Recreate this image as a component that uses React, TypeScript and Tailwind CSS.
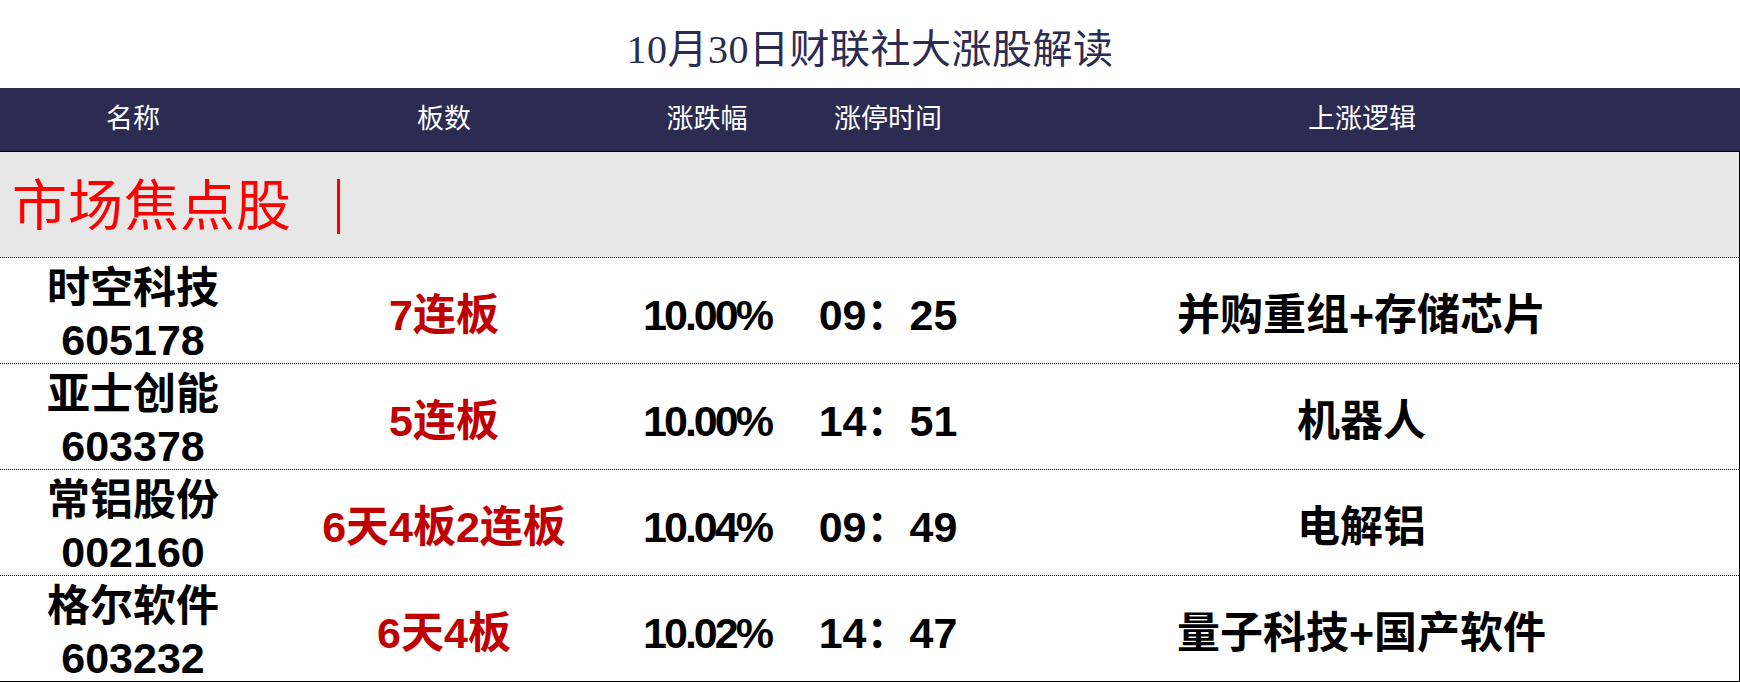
import React from 'react';

interface StockRow {
  name: string;
  code: string;
  boards: string;
  change: string;
  time: string;
  reason: string;
}

const rows: StockRow[] = [
  { name: '时空科技', code: '605178', boards: '7连板', change: '10.00%', time: '09：25', reason: '并购重组+存储芯片' },
  { name: '亚士创能', code: '603378', boards: '5连板', change: '10.00%', time: '14：51', reason: '机器人' },
  { name: '常铝股份', code: '002160', boards: '6天4板2连板', change: '10.04%', time: '09：49', reason: '电解铝' },
  { name: '格尔软件', code: '603232', boards: '6天4板', change: '10.02%', time: '14：47', reason: '量子科技+国产软件' },
];

const sans = { fontFamily: '"Liberation Sans", "Noto Sans CJK SC", sans-serif' };
const serif = { fontFamily: '"Liberation Serif", "Noto Sans CJK SC", serif' };

const cols = 'grid grid-cols-[266px_356px_170px_192px_1fr]';

export default function App() {
  return (
    <div className="w-[1740px] h-[682px] bg-white overflow-hidden" style={sans}>
      {/* Title */}
      <div className="h-[88px] flex items-center justify-center pt-[12px]">
        <h1 className="text-[40px] leading-none text-[#2c2c52] font-normal tracking-[0.5px]" style={serif}>
          10月30日财联社大涨股解读
        </h1>
      </div>

      {/* Header */}
      <div className={`${cols} h-[64px] bg-[#2c2b52] border-b border-black text-white text-[27px] items-center`}>
        <div className="text-center">名称</div>
        <div className="text-center">板数</div>
        <div className="text-center">涨跌幅</div>
        <div className="text-center">涨停时间</div>
        <div className="text-center">上涨逻辑</div>
      </div>

      <div className="border-r border-black">
        {/* Section label */}
        <div className="h-[106px] bg-[#e7e7e7] border-b border-dotted border-black flex items-center pl-[12px] pt-[4px]">
          <span className="text-[55px] leading-none text-[#ff0000] tracking-[1px]" style={serif}>市场焦点股</span>
          <span className="ml-[45px] w-[3px] h-[55px] bg-[#ff0000]" />
        </div>

        {rows.map((r, i) => (
          <div
            key={r.code}
            className={`${cols} h-[106px] items-center font-bold text-[43px] text-black border-b border-black ${
              i === rows.length - 1 ? 'border-solid' : 'border-dotted'
            }`}
          >
            <div className="text-center leading-[52px] pt-[4px]">
              <div>{r.name}</div>
              <div>{r.code}</div>
            </div>
            <div className="text-center text-[#c00000] pt-[6px]">{r.boards}</div>
            <div className="text-center tracking-[-3px] pt-[6px]">{r.change}</div>
            <div className="text-center pt-[6px]">{r.time}</div>
            <div className="text-center pt-[6px]">{r.reason}</div>
          </div>
        ))}
      </div>
    </div>
  );
}
